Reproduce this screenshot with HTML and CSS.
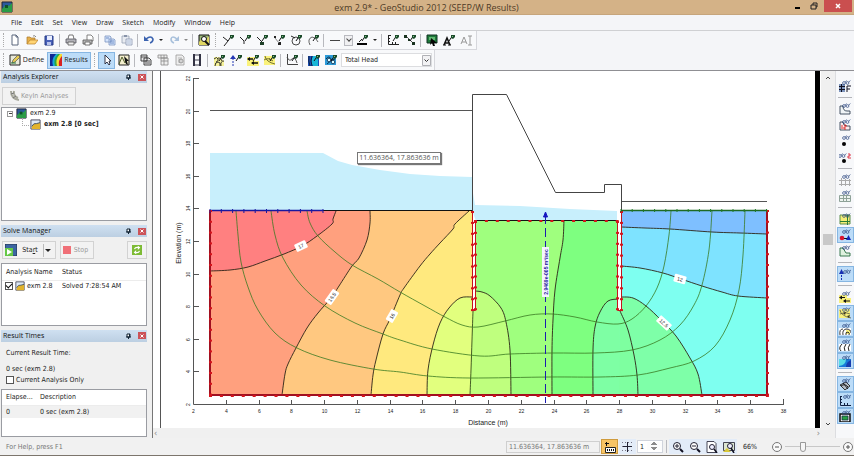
FILE: index.html
```html
<!DOCTYPE html>
<html lang="en">
<head>
<meta charset="utf-8">
<title>exm 2.9* - GeoStudio 2012 (SEEP/W Results)</title>
<link rel="stylesheet" href="styles.css">
</head>
<body>
<svg class="defs" aria-hidden="true">
  <defs>
    <g id="brush"><path d="M6 7 10 1" stroke="#111" fill="none"/><path d="M8 1h4v2l-2 2-2-1z" fill="#1b4a2a"/><path d="M9 2h1v1h-1z" fill="#7fc08a"/></g>
    <g id="eyes" fill="none" stroke="#2a4580" stroke-width=".7"><circle cx="5" cy="3" r="1.400"/><circle cx="8.500" cy="3" r="1.400"/><path d="M6.200 2.200 7.500 .5M9.700 2.200 11.300 .5"/></g>
    <symbol id="new" viewBox="0 0 12 12"><path d="M3 1h4l2 2v8H3z" fill="#fff" stroke="#5b677c"/><path d="M7 1v2h2" fill="none" stroke="#5b677c"/></symbol>
    <symbol id="open" viewBox="0 0 12 12"><path d="M1 10V3h3l1 1h4v2" fill="#e5b04a" stroke="#a9752a" stroke-width=".7"/><path d="M1 10 4 6h8l-3 4z" fill="#ffd473" stroke="#b87f28" stroke-width=".7"/><path d="M7 2q2-1 3 1" fill="none" stroke="#555" stroke-width=".7"/></symbol>
    <symbol id="save" viewBox="0 0 12 12"><path d="M2 2h8v9H2z" fill="#4860b8" stroke="#253a86"/><path d="M4 2h5v4H4z" fill="#e6ecff"/><path d="M4 8h4v3H4z" fill="#b9c4ec"/></symbol>
    <symbol id="print" viewBox="0 0 12 12"><path d="M3 5 4 1h4l1 4" fill="#fff" stroke="#555" stroke-width=".8"/><path d="M1 5h10v4H1z" fill="#b2b2b8" stroke="#55575f" stroke-width=".8"/><path d="M3 8h6v3H3z" fill="#eee" stroke="#555" stroke-width=".8"/></symbol>
    <symbol id="preview" viewBox="0 0 12 12"><path d="M5 1h4l2 2v4H5z" fill="#fff" stroke="#666" stroke-width=".8"/><path d="M1 6h9v4H1z" fill="#bbb" stroke="#555" stroke-width=".8"/><path d="M3 8h5v3H3z" fill="#fff" stroke="#555" stroke-width=".8"/></symbol>
    <symbol id="copy" viewBox="0 0 12 12"><path d="M1 2h5l1 1v5H1zM5 5h5l1 1v5H5z" fill="#d6e5fc" stroke="#7c95c0" stroke-width=".8"/><path d="M6 7h4M6 9h4M2 4h3" stroke="#5678b8" stroke-width=".8"/></symbol>
    <symbol id="paste" viewBox="0 0 12 12"><path d="M1 2h7v7H1z" fill="#e8ebf1" stroke="#98a2b5" stroke-width=".8"/><path d="M3 1h3v2H3z" fill="#8994a9"/><path d="M5 5h6v6H5z" fill="#eef3fc" stroke="#8b98b1" stroke-width=".8"/><path d="M6 7h4M6 9h4" stroke="#9aabc8" stroke-width=".8"/></symbol>
    <symbol id="undo" viewBox="0 0 12 12"><path d="M3 5q5-4 7 0 0 3-3 4" fill="none" stroke="#3b63b0" stroke-width="1.600"/><path d="M1 2v5h5z" fill="#3b63b0"/></symbol>
    <symbol id="redo" viewBox="0 0 12 12"><path d="M9 5q-5-4-6 0 0 3 3 4" fill="none" stroke="#a9c1dc" stroke-width="1.600"/><path d="M11 2v5H6z" fill="#a9c1dc"/></symbol>
    <symbol id="find" viewBox="0 0 12 12"><path d="M1 1h10v10H1z" fill="#9dbb7c" stroke="#111"/><path d="M1 8 5 3l3 3 3-4v9H1z" fill="#dfd663"/><circle cx="6" cy="5" r="2.500" fill="#fff" stroke="#111"/><path d="m7 7 4 4" stroke="#111" stroke-width="2"/></symbol>
    <symbol id="pt1" viewBox="0 0 12 12"><path d="M1 3 6 7 2 12" fill="none" stroke="#222"/><use href="#brush"/></symbol>
    <symbol id="pt2" viewBox="0 0 12 12"><path d="m1 3 4 4v3" fill="none" stroke="#222"/><use href="#brush"/></symbol>
    <symbol id="pt3" viewBox="0 0 12 12"><path d="m1 3 5 5" stroke="#222"/><path d="M4 8h4v3H4z" fill="#1f4028"/><use href="#brush"/></symbol>
    <symbol id="pt4" viewBox="0 0 12 12"><path d="M1 2h2v2H1zM5 8h3v3H5z" fill="#222"/><path d="m2 4 4 5" stroke="#888"/><use href="#brush"/></symbol>
    <symbol id="circ" viewBox="0 0 12 12"><circle cx="6" cy="7" r="4" fill="none" stroke="#333" stroke-width=".9"/><path d="m1 2 4 2" stroke="#222"/><use href="#brush"/></symbol>
    <symbol id="arc" viewBox="0 0 12 12"><path d="M3 11Q0 5 5 3q4 0 6 5" fill="none" stroke="#555" stroke-width=".9"/><use href="#brush"/></symbol>
    <symbol id="line" viewBox="0 0 12 12"><path d="M1 6.500h10" stroke="#444"/></symbol>
    <symbol id="pen" viewBox="0 0 12 12"><path d="M1 9h10v2H1z" fill="#050505"/><use href="#brush"/><path d="m3 8 3-3" stroke="#222"/></symbol>
    <symbol id="axes" viewBox="0 0 12 12"><path d="M1.500 1v9.500H12M1 1.500h3M1 4.500h2M1 7.500h2M5.500 8v2M8.500 8v2" fill="none" stroke="#222"/><use href="#brush"/></symbol>
    <symbol id="link" viewBox="0 0 12 12"><path d="m2 2 7 7" stroke="#555"/><path d="M0 1h3v3H0zM4 5h2v2H4zM8 8h3v3H8z" fill="#1a3320"/><use href="#brush"/></symbol>
    <symbol id="pict" viewBox="0 0 12 12"><path d="M1 1h10v8H1z" fill="#1e7a3a" stroke="#132"/><path d="M3 3h6v3H3z" fill="#63b873"/><path d="m5 4 6 5-3 0 1 3-2 0-1-3-2 2z" fill="#050505"/></symbol>
    <symbol id="txt" viewBox="0 0 12 12"><path d="m1 11 3-7 3 7M2 9h4" fill="none" stroke="#111" stroke-width="1.600"/><path d="M0 11h3M5 11h3" stroke="#111"/><use href="#brush"/></symbol>
    <symbol id="txt2" viewBox="0 0 12 12"><path d="m1 10 3-7 3 7M2 8h4M10 2v9M8 2h4M8 11h4" fill="none" stroke="#999"/></symbol>
    <symbol id="define" viewBox="0 0 12 12"><path d="M1 1h10v10H1z" fill="#e8e8d8" stroke="#222"/><path d="m3 9 1-3 5-5 2 2-5 5z" fill="#e7cb54" stroke="#555" stroke-width=".7"/><path d="M2 9h5" stroke="#297c3c"/></symbol>
    <symbol id="results" viewBox="0 0 12 12"><path d="M0 0h12v12H0z" fill="#102894"/><path d="M3 12Q1 5 6 0h6v12z" fill="#16a7db"/><path d="M5 12Q3 5 8 0h4v12z" fill="#28a940"/><path d="M7 12Q5 5 10 0h2v12z" fill="#f4de35"/><path d="M9 12Q8 6 12 2v10z" fill="#d72222"/></symbol>
    <symbol id="arrow" viewBox="0 0 12 12"><path d="M4 1v9l2-2 2 3 1-1-1-3h2z" fill="#fff" stroke="#223" stroke-width=".9"/></symbol>
    <symbol id="selwin" viewBox="0 0 12 12"><path d="M1 1h10v10H1z" fill="#f5f0cf" stroke="#222"/><path d="m1 10 3-7 3 6 2-4" fill="none" stroke="#53612e"/><path d="m6 2 5 5H9l1 4-2-1-1-3z" fill="#111"/></symbol>
    <symbol id="report" viewBox="0 0 12 12"><path d="M1 1h6v6H1zM4 4h5l2 2v5H4z" fill="#e8e8ea" stroke="#333" stroke-width=".9"/><path d="M1 3h6M5 7h5M5 9h5" stroke="#333" stroke-width=".8"/></symbol>
    <symbol id="table" viewBox="0 0 12 12"><path d="M1 1h9v3H1zM4 4h7v7H4z" fill="#eee" stroke="#888" stroke-width=".8"/><path d="M4 7h7M7 4v7M4 1v3M7 1v3" stroke="#888" stroke-width=".8"/></symbol>
    <symbol id="sheet" viewBox="0 0 12 12"><path d="M2 1h6l2 2v8H2z" fill="#eee" stroke="#999" stroke-width=".8"/><path d="M4 4h4M4 6h4M4 8h4" stroke="#aaa" stroke-width=".8"/><circle cx="7" cy="7" r="2" fill="none" stroke="#888" stroke-width=".8"/></symbol>
    <symbol id="film" viewBox="0 0 12 12"><path d="M2 0h2v12H2zM8 0h2v12H8z" fill="#334"/><path d="M4 1h4M4 6h4M4 11h4" stroke="#445"/></symbol>
    <symbol id="mesh" viewBox="0 0 12 12"><path d="M1 3h5l5 4v5H1z" fill="#f5f29a"/><path d="M1 5q3-3 4 0 1 2-2 3M2 12q0-4 3-4 3 0 2 4M8 12q-1-5 3-5M5 4q3-1 4 3" fill="none" stroke="#222" stroke-width=".9"/><use href="#brush"/></symbol>
    <symbol id="flux" viewBox="0 0 12 12"><path d="M3 12V5" stroke="#2336b4" stroke-dasharray="2 1"/><path d="m0 5 3-4 3 4z" fill="#2336b4"/><use href="#brush"/></symbol>
    <symbol id="vec" viewBox="0 0 12 12"><path d="M0 3h8v4h4v5H0z" fill="#faf27b"/><path d="M1 5h5M5 9h6" stroke="#111" stroke-width="1.300"/><path d="M0 5l3-2v4zM4 9l3-2v4z" fill="#111"/><use href="#brush"/></symbol>
    <symbol id="path" viewBox="0 0 12 12"><path d="M0 2h11v9H0z" fill="#faf27b"/><path d="M1 2q1 6 10 8M0 6q4-3 9 1M5 4l2 3" fill="none" stroke="#66652b" stroke-width=".9"/><use href="#brush"/></symbol>
    <symbol id="graph" viewBox="0 0 12 12"><path d="M1.500 0v10.500H12" fill="none" stroke="#444"/><path d="M1 3q2 5 5 2t5 4" fill="none" stroke="#444" stroke-width=".9"/><use href="#brush"/></symbol>
    <symbol id="cont" viewBox="0 0 12 12"><path d="M0 2h11v10H0z" fill="#1b4fba"/><path d="M5 2q-3 5 0 10h5V2z" fill="#18b6d7"/><path d="M1 2q-1 5 1 10M4 2q-2 5 0 10" fill="none" stroke="#0c2045"/><use href="#brush"/></symbol>
    <symbol id="labels" viewBox="0 0 12 12"><path d="M0 1h11v10H0z" fill="#2c9ad8"/><path d="M1 5q3-4 5 0t4 3M2 10q5-5 8-5" fill="none" stroke="#083650"/><circle cx="4" cy="6" r="1.800" fill="#dff" stroke="#246"/><circle cx="8" cy="8" r="1.800" fill="#dff" stroke="#246"/><use href="#brush"/></symbol>
    <symbol id="keyin" viewBox="0 0 12 12"><path d="M2 1q0 8 8 9M5 1q-1 5 4 7" fill="none" stroke="#a7a89c" stroke-width="2"/><path d="m2 4 3-1M4 8l3-2" stroke="#777"/></symbol>
    <symbol id="proj" viewBox="0 0 12 12"><path d="M1 1h10v10H1z" fill="#2a5a9c" stroke="#223"/><path d="M1 8 5 4l3 1 3-3v9H1z" fill="#2a9c46"/><path d="M4 4h3v3H4z" fill="#0f5228"/></symbol>
    <symbol id="seep" viewBox="0 0 12 12"><path d="M1 1h10v10H1z" fill="#dce8f6" stroke="#445"/><path d="M2 8q2-4 5-3l4-1v7H2z" fill="#e2b32c"/><path d="M2 8q2-4 5-3l4-1" fill="none" stroke="#3b4d62"/></symbol>
    <symbol id="start" viewBox="0 0 12 12"><path d="M0 0h12v12H0z" fill="#3c66a2" stroke="#26334c"/><path d="M0 4h8v8H0z" fill="#65c847"/><path d="m2 5 5 3-5 3z" fill="#fff"/></symbol>
    <symbol id="refresh" viewBox="0 0 12 12"><path d="M0 0h12v12H0z" fill="#7dbb35"/><path d="M3 5q1-3 5-2M9 7q-1 3-5 2" fill="none" stroke="#fff" stroke-width="1.500"/><path d="M7 1l3 2-3 3zM5 6v5L2 9z" fill="#fff"/></symbol>
    <symbol id="pin" viewBox="0 0 6 6"><path d="M1 1h3v3H1zM0 4h5M2.500 4v2" fill="#fff" stroke="#123"/><path d="M3 1h1v3H3z" fill="#123"/></symbol>
    <symbol id="close" viewBox="0 0 6 6"><path d="m1.500 1.500 3 3m0-3-3 3" stroke="#fff"/></symbol>
    <symbol id="r1" viewBox="0 0 12 12"><path d="M0 4h6v8H0z" fill="#7d95bd"/><path d="M0 6.500h6M0 9.500h6M2.500 4v8M8 12V6h4M8 9h3" fill="none" stroke="#112"/><use href="#eyes"/></symbol>
    <symbol id="r2" viewBox="0 0 12 12"><path d="M1 3h3q0 5 4 5h3v3H1z" fill="#f0f4f6" stroke="#345" stroke-width=".9"/><use href="#eyes"/></symbol>
    <symbol id="r3" viewBox="0 0 12 12"><path d="M1 3h3q0 4 4 4h3v4H1z" fill="#fbe9ea" stroke="#345" stroke-width=".9"/><path d="M3 6v4M5 6h2v2H5v2h2" fill="none" stroke="#d22" stroke-width=".9"/><use href="#eyes"/></symbol>
    <symbol id="r4" viewBox="0 0 12 12"><circle cx="5" cy="9" r="2" fill="#050505"/><use href="#eyes"/></symbol>
    <symbol id="r5" viewBox="0 0 12 12"><circle cx="5" cy="10" r="2" fill="#050505"/><path d="M9 3h2v2H9v2h3" fill="none" stroke="#d23" stroke-width=".9"/><g transform="translate(-4 2)"><use href="#eyes"/></g></symbol>
    <symbol id="r6" viewBox="0 0 12 12"><path d="M0 6.500h12M0 10.500h12M2.500 4v8M6.500 5v7M10.500 5v7" stroke="#aaa"/><use href="#eyes"/></symbol>
    <symbol id="r7" viewBox="0 0 12 12"><path d="M.5 5.500h11v6H.5zM1 8.500h10M4.500 5v6M7.500 5v6" fill="#eef4f0" stroke="#8fa298"/><use href="#eyes"/></symbol>
    <symbol id="r8" viewBox="0 0 12 12"><path d="M1 2h10v9H1z" fill="#f5ee76" stroke="#5a8c4c"/><path d="M1 8.500h10M8.500 2v10" stroke="#287c35"/><use href="#eyes"/></symbol>
    <symbol id="r9" viewBox="0 0 12 12"><path d="M3 9.500h7" stroke="#111"/><circle cx="3" cy="9" r="2.300" fill="#dc1630"/><path d="m7 11 2.500-5L12 11z" fill="#1228b8"/><use href="#eyes"/></symbol>
    <symbol id="r10" viewBox="0 0 12 12"><path d="M1 3h3l3 5h4v3H1z" fill="#dff2df" stroke="#276b40" stroke-width=".9"/><use href="#eyes"/></symbol>
    <symbol id="r11" viewBox="0 0 12 12"><path d="M2.500 12V4" stroke="#1830b4" stroke-dasharray="2 1"/><path d="m0 6 2.500-5L5 6z" fill="#1830b4"/><g transform="translate(1 1)"><use href="#eyes"/></g></symbol>
    <symbol id="r12" viewBox="0 0 12 12"><path d="M0 4h8v3h4v5H0z" fill="#f8f07c"/><path d="M1 6.500h5M5 10h6" stroke="#111"/><path d="m0 6.500 3-2v4zM4 10l3-2v4z" fill="#111"/><use href="#eyes"/></symbol>
    <symbol id="r13" viewBox="0 0 12 12"><path d="M0 2h11v9H0z" fill="#f8f07c"/><path d="M1 3q1 6 11 8M1 7q5-3 10 0" fill="none" stroke="#554" stroke-width=".8"/><path d="m4 6 3-1-1 3zM8 9l3-1-1 3z" fill="#332"/><use href="#eyes"/></symbol>
    <symbol id="r14" viewBox="0 0 12 12"><path d="M0 5h12v7H0z" fill="#fff"/><path d="M7 7h4v4H7z" fill="#f8f07c"/><path d="M1 12q-1-6 3-6M4 12q-1-5 3-6 5 0 5 4M7 12q-1-3 2-3 2 1 1 3" fill="none" stroke="#222" stroke-width=".9"/><use href="#eyes"/></symbol>
    <symbol id="r15" viewBox="0 0 12 12"><path d="M0 5h12v7H0z" fill="#fff"/><path d="M3 5q-4 4-1 7M7 5q-3 4-1 7M11 5q-3 4-1 7" fill="none" stroke="#222"/><use href="#eyes"/></symbol>
    <symbol id="r16" viewBox="0 0 12 12"><path d="M0 4h12v8H0z" fill="#167ad8"/><path d="M0 4h7q0 6-7 7z" fill="#58dce5"/><path d="M7 12q0-5 5-7v7z" fill="#153db0"/><use href="#eyes"/></symbol>
    <symbol id="r17" viewBox="0 0 12 12"><path d="m1 7 6-3 4 4-5 4z" fill="#b5bcc6" stroke="#222" stroke-width=".9"/><path d="M2 8q4-3 7 1M4 5l5 6" fill="none" stroke="#111" stroke-width=".9"/><use href="#eyes"/></symbol>
    <symbol id="r18" viewBox="0 0 12 12"><path d="M1.500 2v9.500H12M1 2.500h2M1 5.500h2M1 8.500h2M5.500 9v2M8.500 9v2" fill="none" stroke="#124"/><g transform="translate(1 0)"><use href="#eyes"/></g></symbol>
    <symbol id="r19" viewBox="0 0 12 12"><path d="M1 4h10v8H1z" fill="#eee" stroke="#111" stroke-width="1.500"/><path d="M3 6h6v4H3z" fill="#28a144" stroke="#134" stroke-width=".8"/><use href="#eyes"/></symbol>
    <symbol id="snap" viewBox="0 0 12 12"><path d="M1 2.500h4M2.500 1v4" stroke="#111"/><path d="M1.500 6.500h10v5h-10z" fill="#fff" stroke="#222"/><path d="M3 9h1M5 9h1M7 9h1M9 9h1" stroke="#111" stroke-width="2"/></symbol>
    <symbol id="grid" viewBox="0 0 12 12"><path d="M0 1.500h12M0 5.500h12M0 9.500h12" stroke="#778" stroke-dasharray="1 2"/><path d="M5.500 1v10M1 5.500h9" stroke="#223"/></symbol>
    <symbol id="zin" viewBox="0 0 12 12"><circle cx="5" cy="5" r="3.500" fill="#fff" stroke="#223"/><path d="m8 8 3 3" stroke="#112" stroke-width="2"/><path d="M3 5h4M5 3v4" stroke="#223"/></symbol>
    <symbol id="zout" viewBox="0 0 12 12"><circle cx="5" cy="5" r="3.500" fill="#fff" stroke="#223"/><path d="m8 8 3 3" stroke="#112" stroke-width="2"/><path d="M3 5h4" stroke="#223"/></symbol>
    <symbol id="zpage" viewBox="0 0 12 12"><path d="M1 .5h7l2 2v9H1z" fill="#fff" stroke="#334" stroke-width=".9"/><circle cx="6" cy="6" r="2.500" fill="#eef" stroke="#223"/><path d="m8 8 3 4" stroke="#112" stroke-width="1.500"/></symbol>
    <symbol id="zobj" viewBox="0 0 12 12"><path d="M.5 1.500h11v8H.5z" fill="#dce6d2" stroke="#334" stroke-width=".9"/><path d="m0 11 4-4 4 4z" fill="#d8c83b"/><circle cx="7" cy="5" r="2.500" fill="#eef" stroke="#223"/><path d="m8 7 3 5" stroke="#112" stroke-width="1.500"/></symbol>
  </defs>
</svg>

<header class="titlebar">
  <svg class="ico app"><use href="#proj"/></svg>
  <h1>exm 2.9* - GeoStudio 2012 (SEEP/W Results)</h1>
  <div class="winbtns">
    <button aria-label="Minimize"><svg viewBox="0 0 8 8"><path d="M1 5h5v2H1z"/></svg></button>
    <button aria-label="Restore"><svg viewBox="0 0 8 8"><path d="M1 3h5v4H1zM3 3V1h4v4H6" fill="none" stroke="#222"/></svg></button>
    <button class="x" aria-label="Close"><svg viewBox="0 0 8 8"><path d="m2 2 4 4m0-4L2 6" stroke="#fff" stroke-width="1.500"/></svg></button>
  </div>
</header>

<nav class="menu">
  <a href="#file">File</a><a href="#edit">Edit</a><a href="#set">Set</a><a href="#view">View</a><a href="#draw">Draw</a><a href="#sketch">Sketch</a><a href="#modify">Modify</a><a href="#window">Window</a><a href="#help">Help</a>
</nav>

<div class="bars">
  <div class="bar">
    <i class="grip"></i>
    <button aria-label="New"><svg><use href="#new"/></svg></button>
    <button aria-label="Open"><svg><use href="#open"/></svg></button>
    <button aria-label="Save"><svg><use href="#save"/></svg></button>
    <i class="sep"></i>
    <button aria-label="Print"><svg><use href="#print"/></svg></button>
    <button aria-label="Print preview"><svg><use href="#preview"/></svg></button>
    <i class="sep"></i>
    <button aria-label="Copy"><svg><use href="#copy"/></svg></button>
    <button aria-label="Paste"><svg><use href="#paste"/></svg></button>
    <i class="sep"></i>
    <button aria-label="Undo"><svg><use href="#undo"/></svg></button>
    <button class="dd" aria-label="Undo list"></button>
    <button aria-label="Redo"><svg><use href="#redo"/></svg></button>
    <button class="dd pale" aria-label="Redo list"></button>
    <i class="sep"></i>
    <button aria-label="Find"><svg><use href="#find"/></svg></button>
    <i class="grip mid"></i>
    <button aria-label="Sketch line"><svg><use href="#pt1"/></svg></button>
    <button aria-label="Sketch polyline"><svg><use href="#pt2"/></svg></button>
    <button aria-label="Sketch region"><svg><use href="#pt3"/></svg></button>
    <button aria-label="Sketch arrow"><svg><use href="#pt4"/></svg></button>
    <button aria-label="Sketch circle"><svg><use href="#circ"/></svg></button>
    <button aria-label="Sketch arc"><svg><use href="#arc"/></svg></button>
    <i class="sep"></i>
    <button class="wide" aria-label="Line style"><svg><use href="#line"/></svg></button>
    <button class="drop" aria-label="Line style list"></button>
    <button class="wide" aria-label="Line colour"><svg><use href="#pen"/></svg></button>
    <button class="dd" aria-label="Line colour list"></button>
    <i class="sep"></i>
    <button aria-label="Axes"><svg><use href="#axes"/></svg></button>
    <button aria-label="Dimension"><svg><use href="#link"/></svg></button>
    <i class="sep"></i>
    <button aria-label="Picture"><svg><use href="#pict"/></svg></button>
    <button aria-label="Text"><svg><use href="#txt"/></svg></button>
    <button aria-label="Modify text"><svg><use href="#txt2"/></svg></button>
  </div>
  <div class="bar">
    <i class="grip"></i>
    <button class="mode"><svg><use href="#define"/></svg>Define</button>
    <button class="mode on"><svg><use href="#results"/></svg>Results</button>
    <i class="grip mid"></i>
    <button class="on" aria-label="Select"><svg><use href="#arrow"/></svg></button>
    <button aria-label="View object"><svg><use href="#selwin"/></svg></button>
    <i class="sep"></i>
    <button aria-label="Reports"><svg><use href="#report"/></svg></button>
    <button aria-label="Tables"><svg><use href="#table"/></svg></button>
    <button aria-label="Summary"><svg><use href="#sheet"/></svg></button>
    <button aria-label="Movie"><svg><use href="#film"/></svg></button>
    <i class="sep"></i>
    <button aria-label="Isolines"><svg><use href="#mesh"/></svg></button>
    <button aria-label="Flux"><svg><use href="#flux"/></svg></button>
    <button aria-label="Vectors"><svg><use href="#vec"/></svg></button>
    <button aria-label="Flow paths"><svg><use href="#path"/></svg></button>
    <i class="sep"></i>
    <button aria-label="Graph"><svg><use href="#graph"/></svg></button>
    <i class="sep"></i>
    <button aria-label="Contours"><svg><use href="#cont"/></svg></button>
    <button aria-label="Contour labels"><svg><use href="#labels"/></svg></button>
    <select class="field" aria-label="Contour parameter"><option>Total Head</option></select>
  </div>
</div>

<div class="main">
  <aside class="dock">
    <section class="pane explorer">
      <header><h2>Analysis Explorer</h2><button aria-label="Pin"><svg><use href="#pin"/></svg></button><button class="x" aria-label="Close"><svg><use href="#close"/></svg></button></header>
      <div class="row"><button class="btn off" disabled><svg class="ico"><use href="#keyin"/></svg>KeyIn Analyses</button></div>
      <ul class="box tree">
        <li><i class="minus"></i><svg class="ico"><use href="#proj"/></svg>exm 2.9
          <ul><li><svg class="ico"><use href="#seep"/></svg><b>exm 2.8 [0 sec]</b></li></ul>
        </li>
      </ul>
    </section>
    <section class="pane solve">
      <header><h2>Solve Manager</h2><button aria-label="Pin"><svg><use href="#pin"/></svg></button><button class="x" aria-label="Close"><svg><use href="#close"/></svg></button></header>
      <div class="row">
        <button class="btn start"><svg class="ico"><use href="#start"/></svg><span>Sta<u>r</u>t</span><i class="caret"></i></button>
        <button class="btn off stop" disabled><i class="redsq"></i>Stop</button>
        <button class="btn again" aria-label="Refresh"><svg class="ico"><use href="#refresh"/></svg></button>
      </div>
      <div class="box">
        <table class="jobs">
          <thead><tr><th>Analysis Name</th><th>Status</th></tr></thead>
          <tbody><tr><td><label><input type="checkbox" checked><svg class="ico"><use href="#seep"/></svg>exm 2.8</label></td><td>Solved 7:28:54 AM</td></tr></tbody>
        </table>
      </div>
    </section>
    <section class="pane times">
      <header><h2>Result Times</h2><button aria-label="Pin"><svg><use href="#pin"/></svg></button><button class="x" aria-label="Close"><svg><use href="#close"/></svg></button></header>
      <div class="info">
        <p>Current Result Time:</p>
        <p>0 sec (exm 2.8)</p>
        <label><input type="checkbox">Current Analysis Only</label>
      </div>
      <div class="box">
        <table class="steps">
          <thead><tr><th>Elapse...</th><th>Description</th></tr></thead>
          <tbody><tr><td>0</td><td>0 sec (exm 2.8)</td></tr></tbody>
        </table>
      </div>
    </section>
  </aside>

  <div class="view">
    <div class="canvas">
      <svg id="plot" viewBox="153 71 668 357" role="img" aria-label="Total head contours"></svg>
      <div class="tip">11.636364, 17.863636 m</div>
    </div>
    <div class="hscroll"><button aria-label="Scroll left">‹</button><button aria-label="Scroll right">›</button></div>
  </div>
  <div class="vscroll">
    <button aria-label="Scroll up"><svg viewBox="0 0 8 8"><path d="m2 5 2-2 2 2"/></svg></button>
    <div class="track"><i class="thumb"></i></div>
    <button aria-label="Scroll down"><svg viewBox="0 0 8 8"><path d="m2 3 2 2 2-2"/></svg></button>
  </div>

  <div class="side">
    <button aria-label="View fonts"><svg><use href="#r1"/></svg></button>
    <i class="hsep"></i>
    <button aria-label="View regions"><svg><use href="#r2"/></svg></button>
    <button aria-label="View region numbers"><svg><use href="#r3"/></svg></button>
    <button aria-label="View points"><svg><use href="#r4"/></svg></button>
    <button aria-label="View point numbers"><svg><use href="#r5"/></svg></button>
    <i class="hsep"></i>
    <button aria-label="View grid"><svg><use href="#r6"/></svg></button>
    <button aria-label="View mesh"><svg><use href="#r7"/></svg></button>
    <i class="hsep"></i>
    <button aria-label="View materials"><svg><use href="#r8"/></svg></button>
    <button class="on" aria-label="View boundary conditions"><svg><use href="#r9"/></svg></button>
    <button aria-label="View surface"><svg><use href="#r10"/></svg></button>
    <i class="hsep"></i>
    <button class="on" aria-label="View flux sections"><svg><use href="#r11"/></svg></button>
    <i class="hsep"></i>
    <button aria-label="View vectors"><svg><use href="#r12"/></svg></button>
    <button class="on" aria-label="View flow paths"><svg><use href="#r13"/></svg></button>
    <button class="on" aria-label="View isolines"><svg><use href="#r14"/></svg></button>
    <button class="on" aria-label="View contour lines"><svg><use href="#r15"/></svg></button>
    <button class="on" aria-label="View contour shading"><svg><use href="#r16"/></svg></button>
    <i class="hsep"></i>
    <button class="on" aria-label="View sketch"><svg><use href="#r17"/></svg></button>
    <button class="on" aria-label="View axes"><svg><use href="#r18"/></svg></button>
    <button class="on" aria-label="View pictures"><svg><use href="#r19"/></svg></button>
  </div>
</div>

<footer class="status">
  <span class="help">For Help, press F1</span>
  <output class="pos">11.636364, 17.863636 m</output>
  <button class="snap" aria-label="Snap to grid"><svg><use href="#snap"/></svg></button>
  <button class="lit" aria-label="Show grid"><svg><use href="#grid"/></svg></button>
  <input class="spin" type="number" value="1" aria-label="Grid spacing">
  <i class="sep"></i>
  <button class="lit" aria-label="Zoom in"><svg><use href="#zin"/></svg></button>
  <button class="lit" aria-label="Zoom out"><svg><use href="#zout"/></svg></button>
  <button class="lit" aria-label="Zoom page"><svg><use href="#zpage"/></svg></button>
  <button class="lit" aria-label="Zoom objects"><svg><use href="#zobj"/></svg></button>
  <output class="pct">66%</output>
  <button class="round" aria-label="Decrease zoom"><svg viewBox="0 0 12 12"><circle cx="6" cy="6" r="4.500"/><path d="M4 6h4"/></svg></button>
  <input class="zoom" type="range" min="0" max="100" value="30" aria-label="Zoom">
  <button class="round" aria-label="Increase zoom"><svg viewBox="0 0 12 12"><circle cx="6" cy="6" r="4.500"/><path d="M4 6h4M6 4v4"/></svg></button>
</footer>
<script src="plot.js"></script>
</body>
</html>
```

FILE: styles.css
```css
* { box-sizing: border-box; }
body {
  margin: 0;
  height: 100vh;
  display: grid;
  grid-template-rows: 15px 16px auto 1fr 18px;
  background: #f4f5f8;
  color: #222;
  font: 7px/10px "DejaVu Sans Condensed", "DejaVu Sans", sans-serif;
  overflow: hidden;
}
.defs { position: absolute; width: 0; height: 0; }
button, input, select, output { font: inherit; color: inherit; }
button { border: 0; padding: 0; background: none; display: flex; align-items: center; justify-content: center; }
h1, h2, p, ul { margin: 0; padding: 0; font-weight: normal; }
ul { list-style: none; }
i { flex: none; }
.ico { width: 12px; height: 12px; flex: none; }

.titlebar { display: flex; align-items: center; background: #d4b287; border-bottom: 1px solid #c6a57c; }
.titlebar .app { margin-left: 1px; }
.titlebar h1 { flex: 1; padding-left: 50px; text-align: center; color: #4d3a26; font: 9px/13px "Open Sans", sans-serif; }
.winbtns { display: flex; align-self: flex-start; padding-right: 2px; }
.winbtns button { width: 16px; height: 12px; }
.winbtns svg { width: 8px; height: 8px; }
.winbtns .x { width: 28px; margin-left: 2px; background: #ca4f4f; }

.menu { display: flex; align-items: center; gap: 9px; padding-left: 11px; border-bottom: 1px solid #cfd0d3; font: 7px/10px "Open Sans", sans-serif; }
.menu a { color: #222; text-decoration: none; }

.bars { border-bottom: 1px solid #8f8f93; }
.bar { display: flex; align-items: center; width: fit-content; height: 19px; padding-right: 2px; border: solid #d6d7dc; border-width: 0 1px 1px 0; background: #f8f9fb; }
.bar + .bar { height: 20px; border-bottom: 0; }
.bar button { width: 17px; height: 17px; flex: none; }
.bar svg { width: 12px; height: 12px; flex: none; }
.grip { width: 1px; height: 14px; margin: 0 2px 0 3px; border-left: 1px dotted #aaa; }
.grip.mid { margin: 0 3px; }
.sep { width: 1px; height: 13px; margin: 0 2px; background: #b8b9be; }
.bar .dd { width: 8px; }
.dd::after, .caret::after { content: ""; border: 2px solid transparent; border-top-color: #222; border-bottom: 0; }
.dd.pale::after { border-top-color: #888; }
.bar .wide { width: 18px; }
.bar .drop { width: 9px; height: 11px; border: 1px solid #b9bac0; background: #f0f0f2; }
.drop::after { content: ""; width: 3px; height: 3px; margin-top: -2px; border: solid #444; border-width: 0 1px 1px 0; transform: rotate(45deg); }
.bar .mode { width: 41px; gap: 2px; font: 7px/10px "Open Sans", sans-serif; }
.bar .mode.on { width: 44px; }
.on { background: #bcdcf8; box-shadow: inset 0 0 0 1px #86b6e2; }
.field {
  width: 91px; height: 14px; margin-left: 2px; padding: 0 0 0 3px; appearance: none; border: 1px solid #dcdde0; border-radius: 0;
  background: #fff url("data:image/svg+xml,%3Csvg xmlns='http://www.w3.org/2000/svg' width='9' height='11'%3E%3Cpath d='M.5.5h8v10h-8z' fill='%23f2f2f4' stroke='%23b0b1b6'/%3E%3Cpath d='m2.500 4.500 2 2 2-2' fill='none' stroke='%23333'/%3E%3C/svg%3E") right center no-repeat;
}

.main { display: grid; grid-template-columns: 152px 1fr 14px 19px; min-height: 0; background: #f0f0f0; }
.dock { display: flex; flex-direction: column; gap: 4px; padding: 0 5px 1px 1px; min-height: 0; }
.pane { display: flex; flex-direction: column; flex: 1 1 0; min-height: 0; }
.explorer { flex-grow: 151; }
.solve { flex-grow: 101; }
.times { flex-grow: 108; }
.pane header { display: flex; align-items: center; gap: 6px; height: 12px; flex: none; padding: 0 1px 0 2px; background: linear-gradient(#cfe0f1, #bccfe2); }
.pane h2 { flex: 1; font: 7px/10px "Open Sans", sans-serif; color: #111; }
.pane header svg { width: 6px; height: 6px; }
.pane header .x { width: 8px; height: 7px; background: #cc5358; }
.row { display: flex; align-items: center; gap: 4px; flex: none; padding: 4px 0 4px 1px; }
.explorer .row { padding: 4px 0 2px 1px; }
.btn { height: 18px; padding: 0 6px 0 3px; gap: 3px; border: 1px solid #d2d2d2; background: #f2f2f2; }
.explorer .btn { padding: 0 7px 0 6px; gap: 0; }
.off { color: #9a9a9a; }
.start { width: 54px; padding: 0 2px; justify-content: space-between; }
.caret { display: flex; align-items: center; justify-content: center; width: 10px; height: 13px; border-left: 1px solid #bbb; }
.caret::after { border-width: 3px 3px 0; }
.stop { width: 34px; }
.redsq { width: 8px; height: 8px; background: #f07078; }
.again { width: 20px; margin-left: auto; padding: 0; justify-content: center; }
.again .ico { width: 10px; height: 10px; }
.box { flex: 1; min-height: 0; border: 1px solid #9a9ca2; background: #fff; overflow: hidden; }
.tree { padding: 0 0 0 5px; }
.tree li { display: flex; flex-wrap: wrap; align-items: center; column-gap: 3px; line-height: 11px; }
.tree .ico { width: 11px; height: 11px; }
.tree ul { width: 100%; padding-left: 15px; }
.tree ul li::before { content: ""; width: 6px; height: 7px; margin: -6px -2px 0 0; border: dotted #aaa; border-width: 0 0 1px 1px; }
.minus { width: 6px; height: 6px; border: 1px solid #999; background: linear-gradient(#444, #444) center / 3px 1px no-repeat; }
table { width: 100%; border-collapse: collapse; table-layout: fixed; }
th, td { padding: 0 0 0 4px; height: 12px; font-weight: normal; text-align: left; white-space: nowrap; }
th { height: 16px; border-bottom: 1px solid #ececec; }
.jobs th:first-child { width: 56px; }
.jobs td:first-child { padding-left: 3px; }
.steps th:first-child { width: 34px; }
.steps td { background: #f1f1f1; }
label { display: flex; align-items: center; gap: 2px; }
input[type="checkbox"] { appearance: none; width: 8px; height: 8px; margin: 0; border: 1px solid #555; background: #fff; display: grid; place-items: center; }
input:checked::after { content: ""; width: 5px; height: 3px; margin-top: -2px; border: solid #111; border-width: 0 0 1px 1px; transform: rotate(-45deg); }
.jobs .ico { width: 10px; height: 10px; }
.info { flex: none; padding: 6px 0 4px 5px; }
.info p + p { margin-top: 6px; }
.info label { margin-top: 1px; }

.view { display: flex; flex-direction: column; min-width: 0; border-left: 1px solid #777; }
.canvas { position: relative; flex: 1; min-height: 0; background: #fff; }
#plot { display: block; width: 100%; height: 100%; font-family: "Liberation Sans", Arial, sans-serif; }
.tip { position: absolute; left: 204px; top: 81px; width: 84px; height: 12px; text-align: center; border: 1px solid #777; background: #fff; box-shadow: 1px 1px 1px #777; color: #555; font-family: "Open Sans", sans-serif; }
.hscroll { display: flex; justify-content: space-between; height: 10px; padding: 0 1px; color: #888; font-size: 9px; line-height: 8px; }
.vscroll { display: flex; flex-direction: column; align-items: center; padding: 3px 0 10px; }
.vscroll button, .vscroll svg { width: 8px; height: 8px; }
.vscroll path { fill: none; stroke: #444; }
.track { flex: 1; display: flex; flex-direction: column; }
.track::before { content: ""; height: 45%; }
.thumb { width: 10px; height: 11px; background: #c8c8c8; }

.side { display: flex; flex-direction: column; align-items: center; padding-top: 7px; background: #f7f8fa; border-left: 1px solid #dcdde0; }
.side button { width: 17px; height: 16px; flex: none; }
.side svg { width: 12px; height: 12px; }
.hsep { width: 14px; height: 1px; margin: 3px 0; background: #b4b5ba; }

.status { display: flex; align-items: center; background: #f1f1f1; border-bottom: 1px solid #7c756c; }
.status svg { width: 12px; height: 12px; }
.help { flex: 1; padding-left: 6px; color: #777; }
.pos { width: 94px; height: 12px; padding-left: 2px; border: 1px solid #cfcfcf; color: #777; line-height: 10px; }
.snap { width: 17px; height: 15px; margin: 0 1px; background: #f8c465; box-shadow: inset 0 0 0 1px #cf9b3d; }
.lit { width: 17px; height: 15px; background: #e3ecf8; }
.spin { width: 26px; height: 13px; margin: 0 1px; padding: 0 0 0 2px; border: 1px solid #d0d4dc; background: #fff; }
.spin::-webkit-inner-spin-button { opacity: 1; height: 9px; }
.pct { width: 34px; padding-left: 6px; }
.round circle { fill: #fafafa; stroke: #777; }
.round path { stroke: #555; fill: none; }
.zoom { appearance: none; width: 55px; height: 12px; margin: 0 2px; background: linear-gradient(#c8c8c8, #c8c8c8) center / 100% 1px no-repeat; }
.zoom::-webkit-slider-thumb { appearance: none; width: 6px; height: 10px; border: 1px solid #999; border-radius: 0 0 3px 3px; background: #f6f6f6; }
```

FILE: plot.js
```js
const svg = document.getElementById("plot");
const out = [];
const BOTTOM = 395;

// Catmull-Rom spline through a flat list of x, y values
function curve(flat) {
  const p = [];
  for (let i = 0; i < flat.length; i += 2) p.push([flat[i], flat[i + 1]]);
  let d = "M" + p[0];
  for (let i = 0; i < p.length - 1; i++) {
    const a = p[i - 1] || p[i], b = p[i], c = p[i + 1], e = p[i + 2] || c;
    d += `C${b[0] + (c[0] - a[0]) / 6} ${b[1] + (c[1] - a[1]) / 6} ${c[0] - (e[0] - b[0]) / 6} ${c[1] - (e[1] - b[1]) / 6} ${c}`;
  }
  return d;
}
const path = (d, fill, stroke, w = 1) =>
  out.push(`<path d="${d}" fill="${fill}" stroke="${stroke}" stroke-width="${w}"/>`);
const text = (x, y, s, size, fill = "#222", turn = 0, weight = "normal") =>
  out.push(`<text x="${x}" y="${y}" font-size="${size}" font-weight="${weight}" fill="${fill}" text-anchor="middle" dominant-baseline="central" transform="rotate(${turn} ${x} ${y})">${s}</text>`);

// water
path("M210 153H323L338 161 352 165 380 170 410 174 440 176 472 177V211H210Z", "#c8effc", "none");
path("M473 193 475 205 520 206 570 209 617 211V220H473Z", "#c8effc", "none");

// head bands: contour line, then the edge of the area on its far side
const bands = [
  { fill: "#ff8080", line: null, area: "M210 211H472V395H210Z" },
  { fill: "#ffa07e", line: [336, 211, 333, 219, 332, 224, 317, 236, 302, 246, 284, 254, 265, 261, 248, 267, 230, 270, 210, 271], close: "V395H472V211Z" },
  { fill: "#ffc880", line: [370, 211, 370, 223, 367, 240, 359, 258, 352, 266, 339, 286, 331, 298, 318, 313, 307, 328, 296, 348, 288, 364, 285, 374, 282, 395], close: "H472V211Z" },
  { fill: "#ffe97e", line: [469, 211, 455, 224, 453, 229, 440, 243, 430, 254, 420, 266, 404, 288, 400, 295, 390, 319, 383, 334, 376, 360, 373, 375, 371, 395], close: "H472V211Z" },
  { fill: "#e2ff7e", line: [472, 297, 460, 298, 449, 308, 440, 323, 433, 345, 428, 370, 427, 395], close: "H474V297Z" },
  { fill: "#9fff7e", line: null, area: "M475 220H617V395H470L473 311Z" },
  { fill: "#bfff7e", line: [475, 291, 482, 292, 490, 296, 501, 308, 506, 322, 510, 350, 511, 395], close: "H470L473 311Z" },
  { fill: "#7eff80", line: [564, 220, 563, 240, 560, 258, 555, 290, 553, 320, 552, 350, 552, 395], close: "H620V220Z" },
  { fill: "#7effa4", line: [619, 299, 608, 301, 600, 312, 595, 327, 593, 350, 593, 395], close: "H640L621 311Z" },
  { fill: "#7efff0", line: null, area: "M621 211H767V395H621Z" },
  { fill: "#7effa8", line: [621, 297, 633, 298, 646, 306, 661, 320, 676, 336, 690, 358, 698, 374, 702, 395], close: "H619V297Z" },
  { fill: "#7effa0", line: [620, 311, 628, 330, 634, 355, 637, 375, 638, 395], close: "H619Z" },
  { fill: "#7ee3ff", line: [621, 266, 640, 268, 663, 273, 681, 279, 702, 286, 722, 292, 738, 296, 767, 298], close: "V211H621Z" },
  { fill: "#7ebfff", line: [621, 227, 645, 228, 670, 229, 712, 232, 740, 233, 767, 234], close: "V211H621Z" },
];
bands.forEach(b => path(b.line ? curve(b.line) + b.close : b.area, b.fill, "none"));
path(curve([473, 311, 472, 340, 471, 370, 470, 395]), "none", "#26330d", 0.8);
bands.forEach(b => b.line && path(curve(b.line), "none", "#2c2416", 0.9));

// flow paths
[
  [236, 211, 238, 235, 241, 262, 248, 287, 258, 310, 275, 333, 297, 348, 330, 360, 373, 369, 400, 372, 428, 376, 470, 378, 550, 377, 600, 377, 638, 375, 670, 368, 694, 361, 715, 346, 730, 320, 739, 290, 743, 255, 745, 211],
  [271, 211, 275, 235, 283, 258, 301, 285, 325, 306, 355, 323, 383, 334, 400, 340, 432, 349, 480, 356, 510, 354, 553, 353, 595, 353, 632, 350, 660, 340, 680, 325, 694, 305, 702, 285, 709, 250, 712, 211],
  [307, 211, 310, 223, 318, 236, 335, 252, 352, 265, 378, 279, 400, 292, 425, 306, 445, 317, 462, 325, 478, 327, 505, 321, 530, 315, 552, 314, 575, 317, 597, 322, 618, 324, 632, 319, 646, 306, 657, 288, 664, 266, 669, 235, 671, 211],
].forEach(f => path(curve(f), "none", "#3a7a22", 0.8));

// ground and structure outlines
path("M210 110.500H472M621 201.500H767", "none", "#555");
path("M472.500 211V94.500H506.500L555.500 192.500H604.500V184.500H621.500V211", "none", "#444");
path("M210 395H767M210 211V395M767 211V395", "none", "#a01020", 2);
path("M472.500 211V310.500H475.500V220M617.500 220V310.500H621.500V211", "#fff", "#c4141c");
path("M323 210.500H472M475 220.500H617", "none", "#111");
path("M210 210.500H323", "none", "#1818a0", 1.5);
path("M621 210.500H767", "none", "#1e6a24", 1.5);

// boundary condition markers
const dot = (x, y, c = "#d4141c") => out.push(`<rect x="${x - 1}" y="${y - 1}" width="3" height="2" fill="${c}"/>`);
for (let i = 0; i <= 17; i++) {
  dot(210, 211 + i * 10.8);
  dot(767, 211 + i * 10.8);
}
for (let x = 210; x <= 768; x += 10.92) dot(x, BOTTOM + 1);
for (let y = 212; y < 311; y += 10.9) [472, 621].forEach(x => dot(x, y));
for (let y = 222; y < 311; y += 10.9) [475, 617].forEach(x => dot(x, y));
for (let x = 475; x < 618; x += 10.9) dot(x, 221);
for (let x = 210; x < 324; x += 11.3) path(`M${x} 209v4`, "none", "#1818a0");
for (let x = 621; x < 768; x += 11.2) path(`M${x} 209v3`, "none", "#1e7a24");

// flux section
out.push('<path d="M545.500 215V403" fill="none" stroke="#1c1cb0" stroke-dasharray="9 4"/>');
path("M545.500 212 543.500 217H547.500Z", "#1616c0", "#1616c0");
path("M542 247h7v50h-7z", "#f4f4ff", "none");
text(546, 272, "2.9469e-005 m³/sec", 5, "#20209a", -90, "bold");

// contour labels
[[301, 246, "17", -25, 12], [332, 297, "16.5", -55, 15], [392, 316, "16", -60, 12], [680, 279, "12", 15, 12], [664, 323, "12.5", 42, 15]].forEach(([x, y, s, a, w]) => {
  out.push(`<rect x="${x - w / 2}" y="${y - 4}" width="${w}" height="8" rx="1" fill="#fff" transform="rotate(${a} ${x} ${y})"/>`);
  text(x, y, s, 5, "#222", a);
});

// axes
path("M199 78.500H193.500V404.500H783.500V399", "none", "#555");
for (let v = 2; v <= 38; v += 2) {
  const x = Math.round(193 + (v - 2) * 16.39) + 0.5;
  if (v > 2) path(`M${x} 400v5`, "none", "#555");
  text(x, 411, v, 5);
}
for (let v = 2; v <= 22; v += 2) {
  const y = Math.round(404 - (v - 2) * 16.3) + 0.5;
  if (v > 2) path(`M193 ${y}h6`, "none", "#555");
  text(188, y, v, 5, "#222", -90);
}
text(488, 422, "Distance (m)", 7);
text(178, 243, "Elevation (m)", 7, "#222", -90);

// page edges
path("M160.500 71V428", "none", "#555");
path("M815 71h5v357h-5z", "#000", "none");

svg.innerHTML = out.join("");
```
